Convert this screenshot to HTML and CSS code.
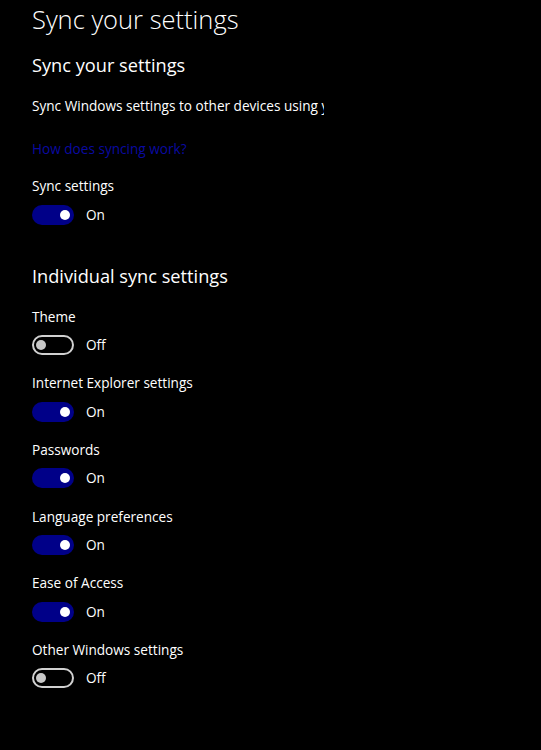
FILE: index.html
```html
<!DOCTYPE html>
<html lang="en">
<head>
<meta charset="utf-8">
<title>Sync your settings</title>
<link rel="stylesheet" href="styles.css">
</head>
<body>
<main class="page">
  <h1 class="title">Sync your settings</h1>
  <h2 class="section-heading first">Sync your settings</h2>
  <p class="desc"><span class="desc-clip">Sync Windows settings to other devices using your Microsoft account.</span></p>
  <a class="link" href="#">How does syncing work?</a>
  <div class="setting master">
    <div class="label">Sync settings</div>
    <div class="toggle-row"><span class="toggle on"><span class="knob"></span></span><span class="state">On</span></div>
  </div>

  <h2 class="section-heading second">Individual sync settings</h2>
  <div class="list">
    <div class="setting">
      <div class="label">Theme</div>
      <div class="toggle-row"><span class="toggle off"><span class="knob"></span></span><span class="state">Off</span></div>
    </div>
    <div class="setting">
      <div class="label">Internet Explorer settings</div>
      <div class="toggle-row"><span class="toggle on"><span class="knob"></span></span><span class="state">On</span></div>
    </div>
    <div class="setting">
      <div class="label">Passwords</div>
      <div class="toggle-row"><span class="toggle on"><span class="knob"></span></span><span class="state">On</span></div>
    </div>
    <div class="setting">
      <div class="label">Language preferences</div>
      <div class="toggle-row"><span class="toggle on"><span class="knob"></span></span><span class="state">On</span></div>
    </div>
    <div class="setting">
      <div class="label">Ease of Access</div>
      <div class="toggle-row"><span class="toggle on"><span class="knob"></span></span><span class="state">On</span></div>
    </div>
    <div class="setting">
      <div class="label">Other Windows settings</div>
      <div class="toggle-row"><span class="toggle off"><span class="knob"></span></span><span class="state">Off</span></div>
    </div>
  </div>
</main>
</body>
</html>
```

FILE: styles.css
```css
html, body {
  margin: 0;
  padding: 0;
  background: #000;
  color: #fff;
  font-family: "Open Sans", "Noto Sans", "DejaVu Sans", sans-serif;
}

.page {
  padding-left: 32px;
  height: 750px;
  box-sizing: border-box;
}

.title {
  margin: 0;
  font-size: 25.5px;
  font-weight: 300;
  line-height: 38px;
  white-space: nowrap;
}

.section-heading {
  margin: 0;
  font-size: 18.2px;
  font-weight: 400;
  line-height: 28px;
  white-space: nowrap;
}

.section-heading.first {
  margin-top: 13px;
}

.section-heading.second {
  margin-top: 37px;
}

.desc {
  margin: 17px 0 0;
  width: 292px;
  overflow: hidden;
  white-space: nowrap;
  font-size: 13.6px;
  line-height: 20px;
}

.link {
  display: block;
  margin-top: 23px;
  font-size: 13.6px;
  line-height: 20px;
  color: #0a0aa0;
  text-decoration: none;
}

.setting.master {
  margin-top: 17px;
}

.list {
  margin-top: 17px;
  display: flex;
  flex-direction: column;
  gap: 18.2px;
}

.label {
  font-size: 13.6px;
  line-height: 20px;
}

.toggle-row {
  margin-top: 8.5px;
  display: flex;
  align-items: center;
  gap: 12px;
  height: 20px;
}

.toggle {
  position: relative;
  display: block;
  box-sizing: border-box;
  width: 42px;
  height: 20px;
  border-radius: 10px;
}

.toggle.on {
  background: #000088;
}

.toggle.off {
  border: 2px solid #d0d0d0;
}

.knob {
  position: absolute;
  top: 50%;
  width: 10px;
  height: 10px;
  margin-top: -5px;
  border-radius: 50%;
}

.toggle.on .knob {
  right: 4px;
  background: #fff;
}

.toggle.off .knob {
  left: 2px;
  background: #c8c8c8;
}

.state {
  font-size: 13.6px;
  line-height: 20px;
}
```
